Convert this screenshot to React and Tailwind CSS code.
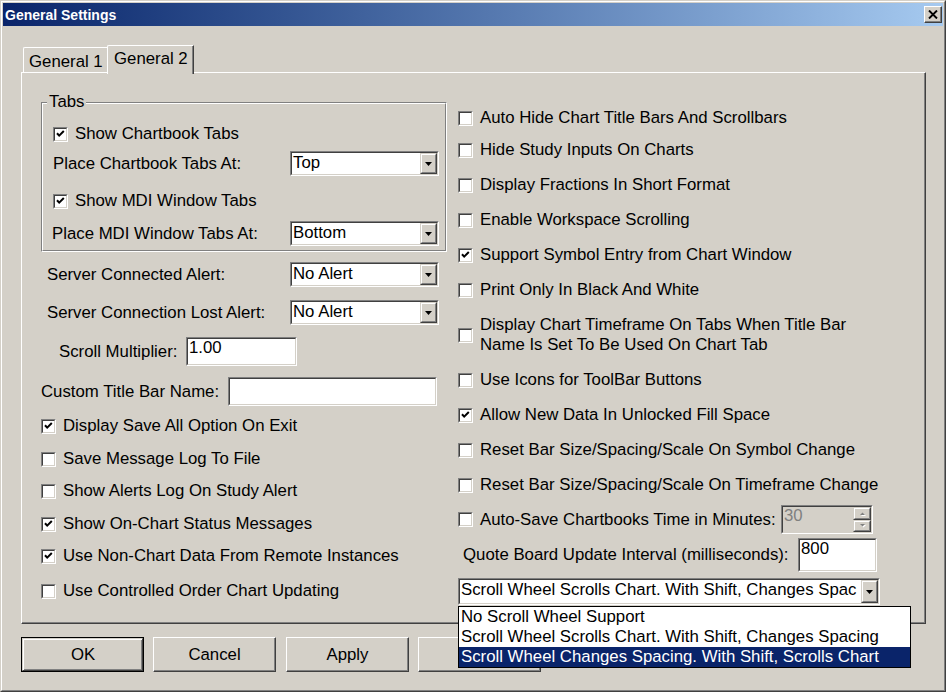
import React from 'react';

// Win2k style bevels
const sunkenOuter = 'border border-t-[#808080] border-l-[#808080] border-b-white border-r-white';
const sunkenInner = 'border border-t-[#404040] border-l-[#404040] border-b-[#d4d0c8] border-r-[#d4d0c8]';
const raised = 'border border-t-[#d4d0c8] border-l-[#d4d0c8] border-b-[#404040] border-r-[#404040]';
const raisedInner = 'border border-t-white border-l-white border-b-[#808080] border-r-[#808080]';

function Check({ checked }) {
  return (
    <span className={`block w-[15px] h-[15px] shrink-0 ${sunkenOuter}`}>
      <span className={`block w-full h-full bg-white ${sunkenInner}`}>
        {checked && (
          <svg width="11" height="11" viewBox="0 0 11 11" className="block">
            <path d="M2 4.2 L4.2 6.6 L8.8 2" fill="none" stroke="#000" strokeWidth="2" />
          </svg>
        )}
      </span>
    </span>
  );
}

function CheckRow({ checked, label, className = '' }) {
  return (
    <div className={`flex items-center h-[20px] gap-[7px] ${className}`}>
      <Check checked={checked} />
      <span className="whitespace-nowrap leading-[20px]">{label}</span>
    </div>
  );
}

function Arrow() {
  return (
    <svg width="7" height="4" viewBox="0 0 7 4" className="block">
      <polygon points="0,0 7,0 3.5,4" fill="#000" />
    </svg>
  );
}

function Combo({ value, className }) {
  return (
    <div className={`shrink-0 ${sunkenOuter} ${className}`}>
      <div className={`flex h-full bg-white ${sunkenInner}`}>
        <span className="flex-1 overflow-hidden whitespace-nowrap pl-[1px] leading-[19px]">{value}</span>
        <span className={`w-[17px] h-full flex items-center justify-center bg-[#d4d0c8] ${raised}`}>
          <span className={`w-full h-full flex items-center justify-center ${raisedInner}`}>
            <Arrow />
          </span>
        </span>
      </div>
    </div>
  );
}

function TextBox({ value, className }) {
  return (
    <div className={`shrink-0 ${sunkenOuter} ${className}`}>
      <div className={`h-full bg-white pl-[1px] leading-[18px] ${sunkenInner}`}>{value}</div>
    </div>
  );
}

function Spinner() {
  return (
    <div className={`shrink-0 w-[92px] h-[29px] ${sunkenOuter}`}>
      <div className={`flex h-full bg-[#d4d0c8] ${sunkenInner}`}>
        <span className="flex-1 pl-[1px] leading-[18px] text-[#808080]">30</span>
        <span className="w-[18px] h-full flex flex-col">
          {[0, 1].map((i) => (
            <span key={i} className={`flex-1 flex items-center justify-center ${raised}`}>
              <span className={`w-full h-full flex items-center justify-center ${raisedInner}`}>
                <svg width="7" height="5" viewBox="0 0 7 5" className="block">
                  <polygon points={i === 0 ? '1,4 6,4 3.5,1.5' : '1,1 6,1 3.5,3.5'} fill="#fff" transform="translate(1,1)" />
                  <polygon points={i === 0 ? '1,4 6,4 3.5,1.5' : '1,1 6,1 3.5,3.5'} fill="#808080" />
                </svg>
              </span>
            </span>
          ))}
        </span>
      </div>
    </div>
  );
}

function Button({ label, isDefault, className = '' }) {
  const face = (
    <div className={`h-full flex items-center justify-center ${isDefault ? raised : 'border border-t-white border-l-white border-b-[#404040] border-r-[#404040]'} shadow-[inset_-1px_-1px_0_#808080]`}>
      {isDefault ? (
        <div className="w-full h-full flex items-center justify-center border-t border-l border-white">{label}</div>
      ) : (
        label
      )}
    </div>
  );
  return (
    <div className={`w-[123px] h-[35px] shrink-0 ${isDefault ? 'border border-black' : ''} ${className}`}>{face}</div>
  );
}

export default function App() {
  return (
    <div className="w-[946px] h-[692px] bg-[#d4d0c8] text-black text-[16.8px] font-['Liberation_Sans',Arial,sans-serif] border border-t-[#d4d0c8] border-l-[#d4d0c8] border-b-[#404040] border-r-[#404040] overflow-hidden">
      <div className="h-full p-px border border-t-white border-l-white border-b-[#808080] border-r-[#808080]">
        {/* title bar */}
        <div className="h-[23px] flex items-center justify-between bg-gradient-to-r from-[#0a246a] to-[#a6caf0] pl-[2px] pr-[1px]">
          <span className="text-white font-bold text-[14px] leading-none">General Settings</span>
          <div className="w-[18px] h-[17px] bg-[#d4d0c8] border border-t-white border-l-white border-b-[#404040] border-r-[#404040] shadow-[inset_-1px_-1px_0_#808080] flex items-center justify-center">
            <svg width="10" height="9" viewBox="0 0 10 9" className="block">
              <path d="M1 0.5 L9 8.5 M9 0.5 L1 8.5" stroke="#000" strokeWidth="1.9" />
            </svg>
          </div>
        </div>

        <div className="pl-[18px] pr-[17px]">
          {/* tab strip */}
          <div className="mt-[19px] h-[27px] flex items-end pl-[2px]">
            <div className="w-[86px] h-[25px] border-l border-t border-white border-r border-r-[#404040] shadow-[inset_-1px_0_0_#808080] rounded-tl-[2px] pl-[5px] leading-[25px] pt-[1px]">
              General 1
            </div>
            <div className="relative z-10 -ml-[2px] -mb-[2px] w-[87px] h-[29px] bg-[#d4d0c8] border-l border-t border-white border-r border-r-[#404040] shadow-[inset_-1px_0_0_#808080] rounded-tl-[2px] pl-[6px] leading-[26px]">
              General 2
            </div>
          </div>

          {/* tab panel */}
          <div className="h-[552px] border border-t-white border-l-white border-b-[#404040] border-r-[#404040] shadow-[inset_-1px_-1px_0_#808080] flex pl-[19px]">
            {/* left column */}
            <div className="w-[406px] shrink-0 flex flex-col">
              <div className={`relative mt-[29px] h-[150px] ${sunkenOuter}`}>
                <span className="absolute left-[5px] -top-[11px] px-[2px] bg-[#d4d0c8] leading-[20px]">Tabs</span>
                <div className={`h-full flex flex-col pl-[10px] ${raisedInner}`}>
                  <CheckRow checked label="Show Chartbook Tabs" className="mt-[20px]" />
                  <div className="mt-[7px] flex items-center h-[25px]">
                    <span className="w-[237px] whitespace-nowrap">Place Chartbook Tabs At:</span>
                    <Combo value="Top" className="w-[149px] h-[25px]" />
                  </div>
                  <CheckRow checked label="Show MDI Window Tabs" className="mt-[15px]" />
                  <div className="mt-[10px] flex items-center h-[25px]">
                    <span className="w-[237px] -ml-[1px] whitespace-nowrap">Place MDI Window Tabs At:</span>
                    <Combo value="Bottom" className="w-[149px] h-[25px] ml-[1px]" />
                  </div>
                </div>
              </div>

              <div className="mt-[10px] flex items-center h-[25px]">
                <span className="w-[249px] pl-[6px] whitespace-nowrap">Server Connected Alert:</span>
                <Combo value="No Alert" className="w-[149px] h-[25px]" />
              </div>
              <div className="mt-[13px] flex items-center h-[25px]">
                <span className="w-[249px] pl-[6px] whitespace-nowrap">Server Connection Lost Alert:</span>
                <Combo value="No Alert" className="w-[149px] h-[25px]" />
              </div>
              <div className="mt-[12px] flex items-center h-[29px]">
                <span className="w-[145px] pl-[18px] whitespace-nowrap">Scroll Multiplier:</span>
                <TextBox value="1.00" className="w-[111px] h-[29px]" />
              </div>
              <div className="mt-[11px] flex items-center h-[29px]">
                <span className="w-[187px] whitespace-nowrap">Custom Title Bar Name:</span>
                <TextBox value="" className="w-[209px] h-[29px]" />
              </div>

              <CheckRow checked label="Display Save All Option On Exit" className="mt-[10px]" />
              <CheckRow label="Save Message Log To File" className="mt-[13px]" />
              <CheckRow label="Show Alerts Log On Study Alert" className="mt-[12px]" />
              <CheckRow checked label="Show On-Chart Status Messages" className="mt-[13px]" />
              <CheckRow checked label="Use Non-Chart Data From Remote Instances" className="mt-[12px]" />
              <CheckRow label="Use Controlled Order Chart Updating" className="mt-[15px]" />
            </div>

            {/* right column */}
            <div className="ml-[11px] flex flex-col">
              <CheckRow label="Auto Hide Chart Title Bars And Scrollbars" className="mt-[35px]" />
              <CheckRow label="Hide Study Inputs On Charts" className="mt-[12px]" />
              <CheckRow label="Display Fractions In Short Format" className="mt-[15px]" />
              <CheckRow label="Enable Workspace Scrolling" className="mt-[15px]" />
              <CheckRow checked label="Support Symbol Entry from Chart Window" className="mt-[15px]" />
              <CheckRow label="Print Only In Black And White" className="mt-[15px]" />
              <div className="mt-[15px] flex items-center h-[40px] gap-[7px]">
                <Check />
                <span className="leading-[20px] whitespace-nowrap">
                  Display Chart Timeframe On Tabs When Title Bar
                  <br />
                  Name Is Set To Be Used On Chart Tab
                </span>
              </div>
              <CheckRow label="Use Icons for ToolBar Buttons" className="mt-[15px]" />
              <CheckRow checked label="Allow New Data In Unlocked Fill Space" className="mt-[15px]" />
              <CheckRow label="Reset Bar Size/Spacing/Scale On Symbol Change" className="mt-[15px]" />
              <CheckRow label="Reset Bar Size/Spacing/Scale On Timeframe Change" className="mt-[15px]" />
              <div className="mt-[10px] flex items-center h-[29px]">
                <Check />
                <span className="w-[308px] pl-[7px] whitespace-nowrap">Auto-Save Chartbooks Time in Minutes:</span>
                <Spinner />
              </div>
              <div className="mt-[4px] flex items-center h-[34px]">
                <span className="w-[340px] pl-[5px] whitespace-nowrap">Quote Board Update Interval (milliseconds):</span>
                <TextBox value="800" className="w-[79px] h-[34px]" />
              </div>
              <div className="relative mt-[6px]">
                <Combo value="Scroll Wheel Scrolls Chart. With Shift, Changes Spac" className="w-[422px] h-[27px]" />
                <div className="absolute z-20 left-0 top-[28px] w-[453px] h-[62px] bg-white border border-black">
                  <div className="h-[20px] leading-[20px] pl-[2px] whitespace-nowrap">No Scroll Wheel Support</div>
                  <div className="h-[20px] leading-[20px] pl-[2px] whitespace-nowrap">Scroll Wheel Scrolls Chart. With Shift, Changes Spacing</div>
                  <div className="h-[20px] leading-[20px] pl-[2px] whitespace-nowrap bg-[#0a246a] text-white">Scroll Wheel Changes Spacing. With Shift, Scrolls Chart</div>
                </div>
              </div>
            </div>
          </div>

          {/* buttons */}
          <div className="mt-[13px] flex">
            <Button label="OK" isDefault />
            <Button label="Cancel" className="ml-[9px]" />
            <Button label="Apply" className="ml-[10px]" />
            <Button label="" className="ml-[9px]" />
          </div>
        </div>
      </div>
    </div>
  );
}
